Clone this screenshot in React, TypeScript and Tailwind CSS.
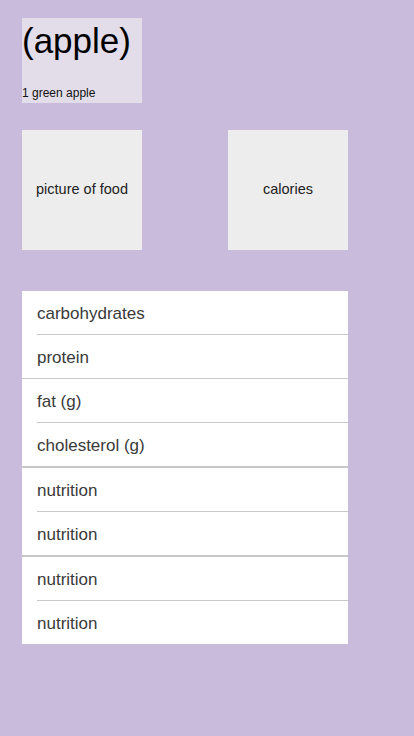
import React from 'react';

interface Row {
    label: string;
    line: 'inset' | 'full' | 'group' | 'none';
}

const rows: Row[] = [
    { label: 'carbohydrates', line: 'inset' },
    { label: 'protein', line: 'full' },
    { label: 'fat (g)', line: 'inset' },
    { label: 'cholesterol (g)', line: 'group' },
    { label: 'nutrition', line: 'inset' },
    { label: 'nutrition', line: 'group' },
    { label: 'nutrition', line: 'inset' },
    { label: 'nutrition', line: 'none' },
];

const App: React.FC = () => {
    return (
        <div
            className="min-h-[736px] w-[414px] bg-[#c9bbdb] pl-[22px] pt-[18px]"
            style={{ fontFamily: '"Liberation Sans", Arial, sans-serif' }}
        >
            {/* Header */}
            <div className="flex h-[85px] w-[120px] flex-col bg-[#e2dde9]">
                <div className="mt-[3px] text-[35px] leading-[40px] text-black">(apple)</div>
                <div className="mt-auto pb-[3px] text-[12px] leading-[14px] text-[#111]">1 green apple</div>
            </div>

            {/* Picture + calories */}
            <div className="mt-[27px] flex gap-[86px]">
                <div className="flex h-[120px] w-[120px] items-center justify-center bg-[#ededed] text-[14.5px] text-[#222]">
                    picture of food
                </div>
                <div className="flex h-[120px] w-[120px] items-center justify-center bg-[#ededed] text-[14.5px] text-[#222]">
                    calories
                </div>
            </div>

            {/* Nutrition list */}
            <div className="mt-[41px] w-[326px] bg-white">
                {rows.map((row, i) => (
                    <div key={i}>
                        <div className="flex h-[43px] items-center pl-[15px] pt-[2px] text-[17px] text-[#3a3a3a]">
                            {row.label}
                        </div>
                        {row.line === 'inset' && <div className="ml-[15px] h-px bg-[#c8c8c8]" />}
                        {row.line === 'full' && <div className="h-px bg-[#c8c8c8]" />}
                        {row.line === 'group' && <div className="h-[2px] bg-[#c8c8c8]" />}
                    </div>
                ))}
            </div>
        </div>
    );
};

export default App;
